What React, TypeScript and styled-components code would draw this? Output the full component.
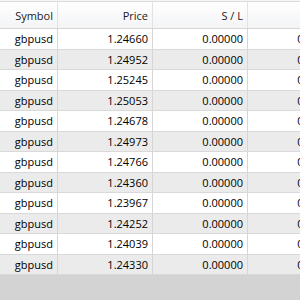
import React from 'react';
import styled, { createGlobalStyle } from 'styled-components';

const GlobalStyle = createGlobalStyle`
    html, body {
        margin: 0;
        padding: 0;
        background: #f0f0f0;
    }
`;

const Window = styled.div({
    width: 300,
    height: 300,
    overflow: 'hidden',
    background: '#d3d3d3',
    display: 'flex',
    flexDirection: 'column',
    fontFamily: '"Open Sans", "Liberation Sans", sans-serif',
    fontSize: 11,
    color: '#000'
});

const TopGap = styled.div({
    height: 1,
    background: '#f4f4f4',
    flexShrink: 0
});

const Grid = styled.div({
    display: 'flex',
    flexDirection: 'column',
    width: 342,
    flexShrink: 0
});

const HeaderRow = styled.div({
    display: 'flex',
    height: 26,
    borderTop: '1px solid #dcdcdc',
    borderBottom: '1px solid #d5d5d5',
    background: 'linear-gradient(#ffffff, #f3f4f6)'
});

const HeaderCell = styled.div<{ $width: number }>(props => ({
    width: props.$width,
    flexShrink: 0,
    boxSizing: 'border-box',
    display: 'flex',
    alignItems: 'center',
    justifyContent: 'flex-end',
    paddingRight: 4,
    borderRight: '1px solid #e3e3e3',
    color: '#1a1a1a'
}));

const Row = styled.div<{ $odd: boolean }>(props => ({
    display: 'flex',
    height: 20.5,
    boxSizing: 'border-box',
    borderBottom: '1px solid #d9d9d9',
    background: props.$odd ? '#ebebeb' : '#ffffff'
}));

const Cell = styled.div<{ $width: number }>(props => ({
    width: props.$width,
    flexShrink: 0,
    boxSizing: 'border-box',
    display: 'flex',
    alignItems: 'center',
    justifyContent: 'flex-end',
    paddingRight: 4,
    borderRight: '1px solid #d6d6d6',
    whiteSpace: 'nowrap'
}));

const columns = [
    { title: 'Symbol', width: 58 },
    { title: 'Price', width: 95 },
    { title: 'S / L', width: 95 },
    { title: 'T / P', width: 95 }
];

const prices = [
    '1.24660', '1.24952', '1.25245', '1.25053', '1.24678', '1.24973',
    '1.24766', '1.24360', '1.23967', '1.24252', '1.24039', '1.24330'
];

export default function App() {
    return (
        <Window>
            <GlobalStyle />
            <TopGap />
            <Grid>
                <HeaderRow>
                    {columns.map(c => (
                        <HeaderCell key={c.title} $width={c.width}>{c.title}</HeaderCell>
                    ))}
                </HeaderRow>

                {prices.map((price, i) => (
                    <Row key={price} $odd={i % 2 === 1}>
                        <Cell $width={columns[0].width}>gbpusd</Cell>
                        <Cell $width={columns[1].width}>{price}</Cell>
                        <Cell $width={columns[2].width}>0.00000</Cell>
                        <Cell $width={columns[3].width}>0.00000</Cell>
                    </Row>
                ))}
            </Grid>
        </Window>
    );
}
